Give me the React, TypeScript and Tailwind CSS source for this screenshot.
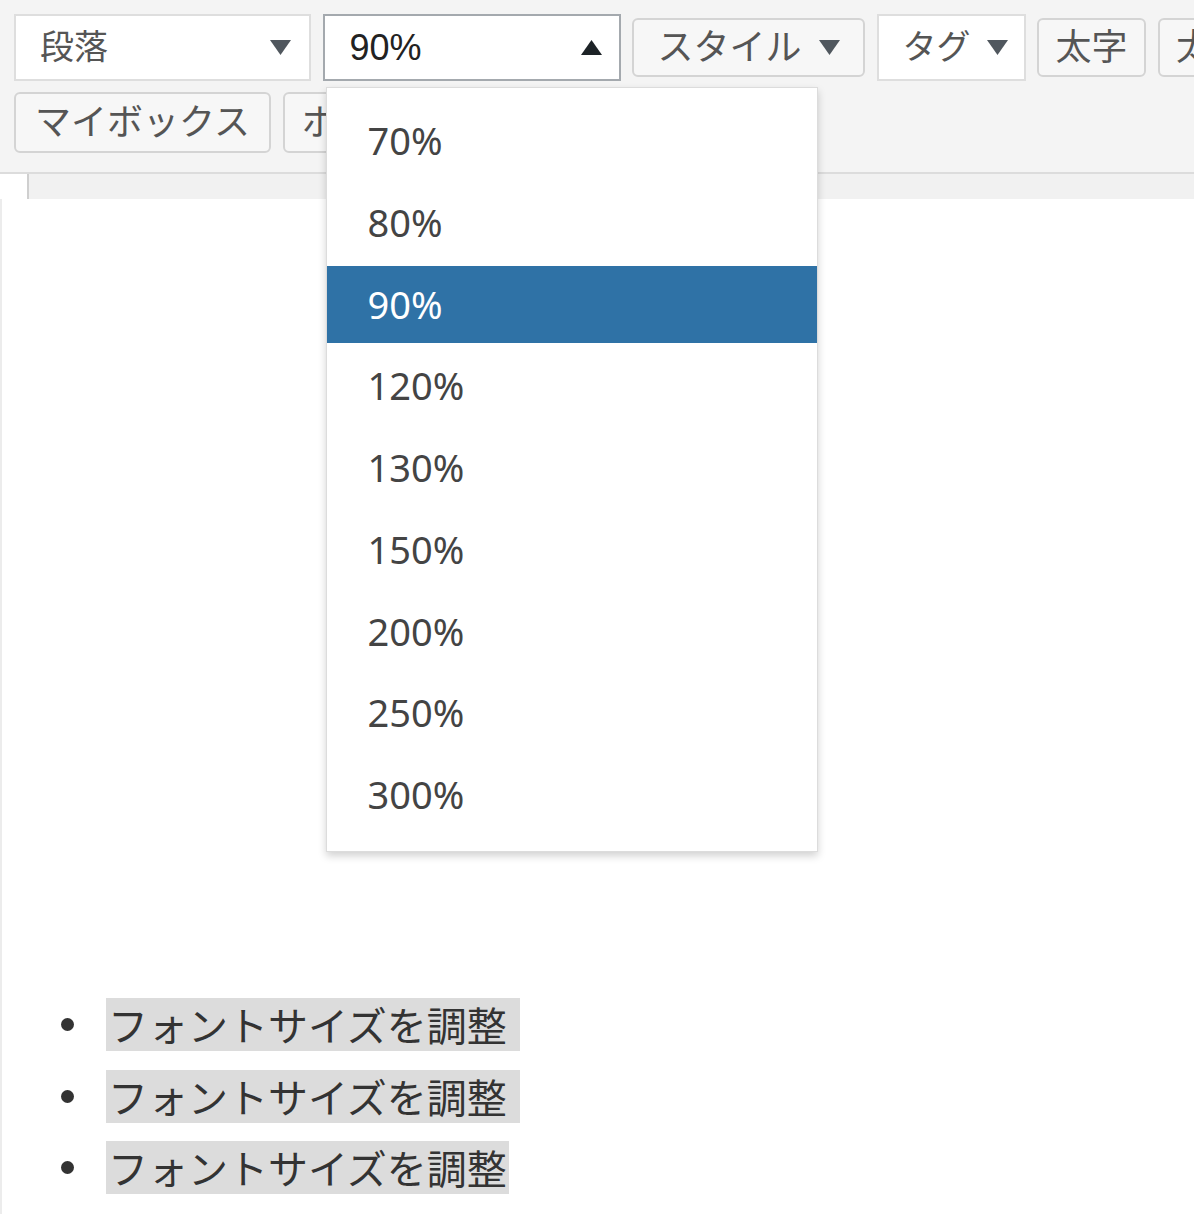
const FONT = "font-['Liberation_Sans','Noto_Sans_CJK_JP',sans-serif]";

const SIZES = ["70%", "80%", "90%", "120%", "130%", "150%", "200%", "250%", "300%"];

function Down({ color = "#50575e" }: { color?: string }) {
  return (
    <svg width="21" height="15" viewBox="0 0 21 15" className="shrink-0">
      <polygon points="0,0 21,0 10.5,15" fill={color} />
    </svg>
  );
}

function Up() {
  return (
    <svg width="21" height="15" viewBox="0 0 21 15" className="shrink-0">
      <polygon points="0,15 21,15 10.5,0" fill="#1d2327" />
    </svg>
  );
}

function Btn({ label, w, arrow }: { label: string; w: string; arrow?: boolean }) {
  return (
    <div
      className={`${w} h-[59px] shrink-0 flex items-center justify-center gap-[17px] rounded-[6px] border-2 border-[#d4d4d4] bg-[#f7f7f7] text-[36px] leading-none text-[#555]`}
    >
      <span>{label}</span>
      {arrow && <Down />}
    </div>
  );
}

export default function App() {
  return (
    <div className={`relative min-h-screen overflow-x-clip bg-white ${FONT}`}>
      {/* Toolbar */}
      <div className="bg-[#f4f4f4] border-b-2 border-[#dcdcdc] pl-[14px] pt-[14px] pb-[19px] flex flex-col gap-[11px]">
        <div className="flex items-center gap-[11.5px] h-[67px]">
          <div className="w-[297px] h-[67px] shrink-0 flex items-center justify-between pl-[24px] pr-[18px] bg-white border-2 border-[#dedede] text-[34px] text-[#555]">
            <span>段落</span>
            <Down />
          </div>

          <div className="relative w-[298px] h-[67px] shrink-0">
            <div className="h-full flex items-center justify-between pl-[25px] pr-[17px] bg-white border-2 border-[#a4a9ae] text-[36px] text-[#222]">
              <span>90%</span>
              <Up />
            </div>

            {/* Dropdown menu */}
            <div className="absolute left-[3px] top-[73px] z-10 w-[492px] bg-white border border-[#dcdcdc] shadow-[0_4px_8px_rgba(0,0,0,0.18)] pt-[14px] pb-[18px] flex flex-col gap-[4.75px]">
              {SIZES.map((s) => (
                <div
                  key={s}
                  className={`h-[77px] flex items-center pl-[41px] font-['Noto_Sans',sans-serif] text-[38px] ${
                    s === "90%" ? "bg-[#2f72a6] text-white" : "text-[#444]"
                  }`}
                >
                  {s}
                </div>
              ))}
            </div>
          </div>

          <Btn label="スタイル" w="w-[233px]" arrow />

          <div className="w-[149px] h-[67px] shrink-0 flex items-center pl-[24px] gap-[16px] bg-white border-2 border-[#dedede] text-[34px] text-[#555]">
            <span>タグ</span>
            <Down />
          </div>

          <Btn label="太字" w="w-[109px]" />
          <Btn label="太字" w="w-[109px]" />
        </div>

        <div className="flex items-center gap-[12px] h-[61px]">
          <div className="w-[257px] h-[61px] shrink-0 flex items-center justify-center rounded-[6px] border-2 border-[#d4d4d4] bg-[#f7f7f7] text-[36px] text-[#555]">
            マイボックス
          </div>
          <div className="w-[200px] h-[61px] shrink-0 flex items-center pl-[17px] rounded-[6px] border-2 border-[#d4d4d4] bg-[#f7f7f7] text-[36px] text-[#555]">
            ボックス
          </div>
        </div>
      </div>

      {/* Strip under toolbar */}
      <div className="flex h-[25px]">
        <div className="w-[27px] bg-white" />
        <div className="flex-1 bg-[#f1f1f1] border-l-2 border-[#cfcfcf]" />
      </div>

      {/* Editor content */}
      <div className="border-l-2 border-[#ececec] pt-[799px] pb-[21px] pl-[59px] flex flex-col gap-[18.5px] font-['Noto_Sans_CJK_JP',sans-serif] text-[40px] text-[#333]">
        {[true, true, false].map((trail, i) => (
          <div key={i} className="flex items-center h-[53px]">
            <span className="w-[13px] h-[13px] rounded-full bg-[#333] shrink-0" />
            <span
              className={`ml-[32px] h-[53px] leading-[53px] bg-[#dcdcdc] pl-[2px] ${trail ? "pr-[13px]" : "pr-[2px]"}`}
            >
              フォントサイズを調整
            </span>
          </div>
        ))}
      </div>
    </div>
  );
}
